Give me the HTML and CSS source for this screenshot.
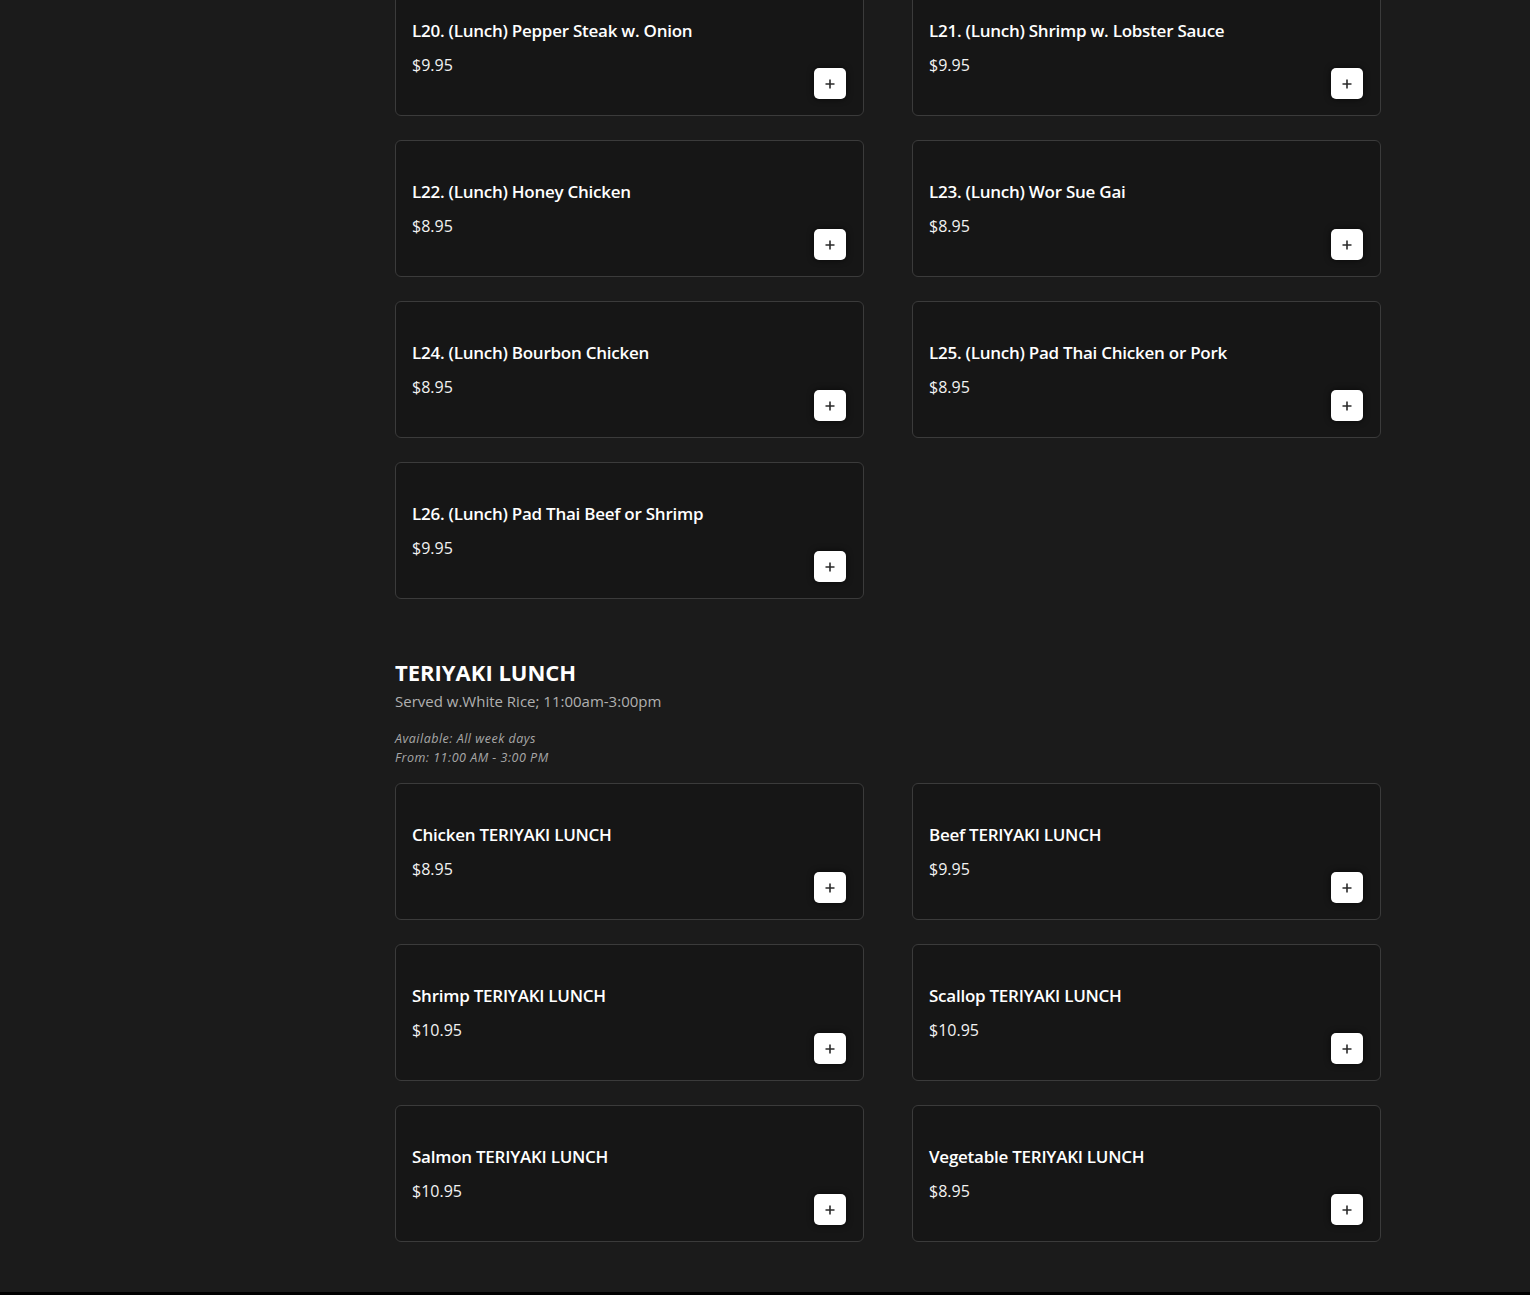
FILE: index.html
```html
<!DOCTYPE html>
<html>
<head>
<meta charset="utf-8">
<link rel="stylesheet" href="styles.css">
</head>
<body>
<main class="menu">
  <section class="category">
    <div class="grid">
      <div class="card"><div class="name">L20. (Lunch) Pepper Steak w. Onion</div><div class="price">$9.95</div><button class="add"><svg viewBox="0 0 10 10" width="10" height="10"><path d="M5 0.5v9M0.5 5h9"/></svg></button></div>
      <div class="card"><div class="name">L21. (Lunch) Shrimp w. Lobster Sauce</div><div class="price">$9.95</div><button class="add"><svg viewBox="0 0 10 10" width="10" height="10"><path d="M5 0.5v9M0.5 5h9"/></svg></button></div>
      <div class="card"><div class="name">L22. (Lunch) Honey Chicken</div><div class="price">$8.95</div><button class="add"><svg viewBox="0 0 10 10" width="10" height="10"><path d="M5 0.5v9M0.5 5h9"/></svg></button></div>
      <div class="card"><div class="name">L23. (Lunch) Wor Sue Gai</div><div class="price">$8.95</div><button class="add"><svg viewBox="0 0 10 10" width="10" height="10"><path d="M5 0.5v9M0.5 5h9"/></svg></button></div>
      <div class="card"><div class="name">L24. (Lunch) Bourbon Chicken</div><div class="price">$8.95</div><button class="add"><svg viewBox="0 0 10 10" width="10" height="10"><path d="M5 0.5v9M0.5 5h9"/></svg></button></div>
      <div class="card"><div class="name">L25. (Lunch) Pad Thai Chicken or Pork</div><div class="price">$8.95</div><button class="add"><svg viewBox="0 0 10 10" width="10" height="10"><path d="M5 0.5v9M0.5 5h9"/></svg></button></div>
      <div class="card"><div class="name">L26. (Lunch) Pad Thai Beef or Shrimp</div><div class="price">$9.95</div><button class="add"><svg viewBox="0 0 10 10" width="10" height="10"><path d="M5 0.5v9M0.5 5h9"/></svg></button></div>
    </div>
  </section>
  <section class="category">
    <h2 class="title">TERIYAKI LUNCH</h2>
    <p class="desc">Served w.White Rice; 11:00am-3:00pm</p>
    <p class="avail">Available: All week days<br>From: 11:00 AM - 3:00 PM</p>
    <div class="grid">
      <div class="card"><div class="name">Chicken TERIYAKI LUNCH</div><div class="price">$8.95</div><button class="add"><svg viewBox="0 0 10 10" width="10" height="10"><path d="M5 0.5v9M0.5 5h9"/></svg></button></div>
      <div class="card"><div class="name">Beef TERIYAKI LUNCH</div><div class="price">$9.95</div><button class="add"><svg viewBox="0 0 10 10" width="10" height="10"><path d="M5 0.5v9M0.5 5h9"/></svg></button></div>
      <div class="card"><div class="name">Shrimp TERIYAKI LUNCH</div><div class="price">$10.95</div><button class="add"><svg viewBox="0 0 10 10" width="10" height="10"><path d="M5 0.5v9M0.5 5h9"/></svg></button></div>
      <div class="card"><div class="name">Scallop TERIYAKI LUNCH</div><div class="price">$10.95</div><button class="add"><svg viewBox="0 0 10 10" width="10" height="10"><path d="M5 0.5v9M0.5 5h9"/></svg></button></div>
      <div class="card"><div class="name">Salmon TERIYAKI LUNCH</div><div class="price">$10.95</div><button class="add"><svg viewBox="0 0 10 10" width="10" height="10"><path d="M5 0.5v9M0.5 5h9"/></svg></button></div>
      <div class="card"><div class="name">Vegetable TERIYAKI LUNCH</div><div class="price">$8.95</div><button class="add"><svg viewBox="0 0 10 10" width="10" height="10"><path d="M5 0.5v9M0.5 5h9"/></svg></button></div>
    </div>
  </section>
</main>
<div class="footer-edge"></div>
</body>
</html>
```

FILE: styles.css
```css
html, body {
  margin: 0;
  padding: 0;
  background: #1b1b1b;
  height: 1295px;
  overflow: hidden;
}
body {
  font-family: "Open Sans", "Noto Sans", sans-serif;
  color: #fff;
  display: flex;
  flex-direction: column;
}
.menu {
  width: 986px;
  margin: -21px 0 0 395px;
  flex: 1;
}
.category + .category {
  margin-top: 60px;
}
.grid {
  display: grid;
  grid-template-columns: 469px 469px;
  column-gap: 48px;
  row-gap: 24px;
}
.card {
  box-sizing: border-box;
  height: 137px;
  background: #161616;
  border: 1px solid #3b3b3b;
  border-radius: 6px;
  padding: 40px 16px 0 16px;
  position: relative;
}
.name {
  font-size: 17px;
  font-weight: 600;
  line-height: 22px;
  letter-spacing: -0.25px;
}
.price {
  font-size: 16px;
  line-height: 22px;
  margin-top: 12px;
  color: #f2f2f2;
}
.add {
  position: absolute;
  right: 17px;
  bottom: 16px;
  width: 32px;
  height: 31px;
  border: none;
  border-radius: 5px;
  background: #fff;
  padding: 0;
  display: flex;
  align-items: center;
  justify-content: center;
  box-shadow: 0 0 6px rgba(0,0,0,0.7);
}
.add svg {
  display: block;
  stroke: #2b2b2b;
  stroke-width: 1.6;
  fill: none;
}
.title {
  margin: 0;
  font-size: 22px;
  font-weight: 700;
  line-height: 26px;
}
.desc {
  margin: 6px 0 0 0;
  font-size: 15px;
  line-height: 20px;
  color: #b0b0b0;
}
.avail {
  margin: 18px 0 16px 0;
  font-size: 12.5px;
  line-height: 19px;
  font-style: italic;
  letter-spacing: 0.5px;
  color: #a8a8a8;
}
.footer-edge {
  height: 3px;
  background: #000;
}
```
